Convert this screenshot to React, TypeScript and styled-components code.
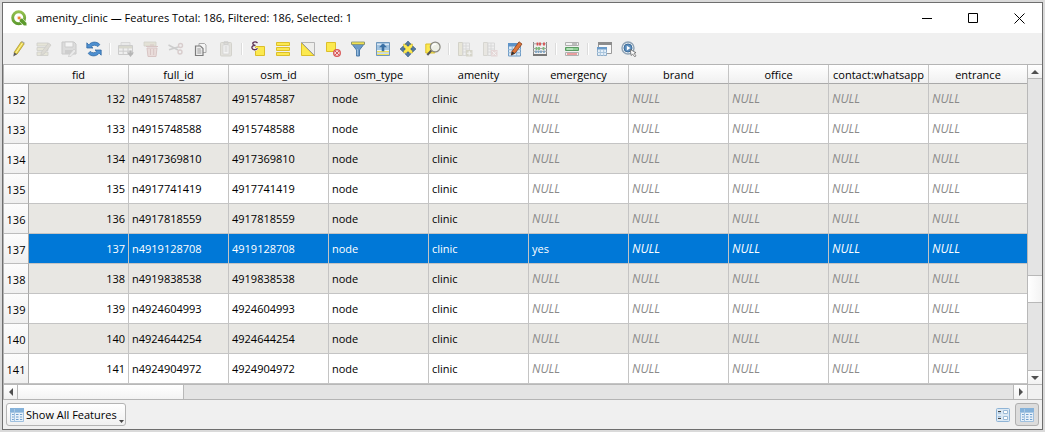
import React from "react";
import styled, { createGlobalStyle, css } from "styled-components";

const GlobalStyle = createGlobalStyle`
  *, *::before, *::after { box-sizing: border-box; }
  body { margin: 0; background: #dadada; }
  button { font: inherit; color: inherit; margin: 0; padding: 0; border: 0; background: none; }
`;

const Desktop = styled.div`
  display: flex;
  height: 100vh;
  padding: 2px;
  font: 11px/16px "Open Sans", "Noto Sans", sans-serif;
  color: #000;
`;

const Window = styled.main`
  display: flex;
  flex: 1;
  flex-direction: column;
  min-width: 0;
  border: 1px solid #6e6e6e;
  background: #f0f0f0;
`;

const TitleBar = styled.header`
  display: flex;
  align-items: center;
  height: 30px;
  padding-left: 8px;
  background: #fff;
`;

const Title = styled.h1`
  flex: 1;
  margin: 0;
  padding-left: 9px;
  font-size: 11px;
  font-weight: 400;
  white-space: nowrap;
`;

const CaptionButton = styled.button`
  display: flex;
  align-items: center;
  justify-content: center;
  width: 46px;
  height: 30px;
`;

const Toolbar = styled.div`
  display: flex;
  align-items: center;
  height: 31px;
  padding-left: 3px;
`;

const ToolButton = styled.button`
  display: flex;
  align-items: center;
  justify-content: center;
  width: 25px;
  height: 25px;
  &:disabled { opacity: 0.33; }
`;

const Separator = styled.span`
  width: 2px;
  height: 12px;
  margin: 0 2px 0 3px;
  border-left: 1px solid #dcdcdc;
  border-right: 1px solid #fff;
`;

const Grid = styled.div`
  display: grid;
  flex: 1;
  grid-template-columns: minmax(0, 1fr) 15px;
  grid-template-rows: minmax(0, 1fr) 15px;
  min-height: 0;
  border: 1px solid #b4b4b4;
  border-right: 0;
`;

const Viewport = styled.div`
  overflow: hidden;
  background: #fff;
`;

const Table = styled.table`
  width: 100%;
  table-layout: fixed;
  border-collapse: separate;
  border-spacing: 0;
`;

const RowHeadCol = styled.col`
  width: 25px;
`;

const FieldCol = styled.col`
  width: 100px;
`;

const headCell = css`
  padding: 0;
  border: 0 solid #b4b4b4;
  font-weight: 400;
`;

const ColumnHead = styled.th<{ $corner?: boolean }>`
  ${headCell}
  height: 19px;
  padding-top: 2px;
  border-right: ${(p) => (p.$corner ? 0 : "1px solid #c4c4c4")};
  border-bottom: 1px solid #a9a9a9;
  background: linear-gradient(#fff, #f0f0f0);
  white-space: nowrap;
  &:last-child { border-right: 0; }
`;

const RowHead = styled.th`
  ${headCell}
  height: 30px;
  padding-top: 2px;
  border-right: 1px solid #a9a9a9;
  border-bottom: 1px solid #bdbdbd;
  background: linear-gradient(#fdfdfd, #efefef);
  color: #000;
  text-align: center;
`;

const Row = styled.tr<{ $selected: boolean }>`
  background: #fff;
  &:nth-child(odd) { background: #e8e7e3; }
  ${(p) =>
    p.$selected &&
    css`
      &&& { background: #0078d7; color: #fff; }
    `}
`;

const Cell = styled.td<{ $right?: boolean }>`
  height: 30px;
  padding: 0 3px;
  border-right: 1px solid #c4c4c4;
  border-bottom: 1px solid #c4c4c4;
  text-align: ${(p) => (p.$right ? "right" : "left")};
  white-space: nowrap;
  &:last-child { border-right: 0; }
`;

const Null = styled.em<{ $selected: boolean }>`
  color: ${(p) => (p.$selected ? "#fff" : "#8a8a8a")};
  font-size: 12px;
`;

const ScrollBar = styled.div<{ $vertical?: boolean }>`
  display: flex;
  flex-direction: ${(p) => (p.$vertical ? "column" : "row")};
  border: 0 solid #b8b8b8;
  ${(p) => (p.$vertical ? "border-left-width: 1px;" : "border-top-width: 1px;")}
  background: #e4e4e4;
`;

const ScrollArrow = styled.button`
  display: flex;
  flex: 0 0 13px;
  align-items: center;
  justify-content: center;
  background: linear-gradient(#fff, #f1f1f1);
`;

const Track = styled.div<{ $vertical?: boolean }>`
  display: grid;
  flex: 1;
  border: 0 solid #b8b8b8;
  ${(p) =>
    p.$vertical
      ? "grid-template-rows: 197fr 28fr 67fr; border-width: 1px 0;"
      : "grid-template-columns: 166fr 829fr; border-width: 0 1px;"}
`;

const Thumb = styled.div<{ $vertical?: boolean }>`
  border: 0 solid #b8b8b8;
  ${(p) =>
    p.$vertical
      ? "grid-row: 2; border-width: 1px 0; background: linear-gradient(90deg, #fff, #f3f3f3);"
      : "border-right-width: 1px; background: linear-gradient(#fff, #f3f3f3);"}
`;

const Corner = styled.div`
  border: 0 solid #b8b8b8;
  border-width: 1px 0 0 1px;
`;

const Footer = styled.footer`
  display: flex;
  align-items: center;
  justify-content: space-between;
  height: 29px;
  padding: 0 3px;
`;

const FilterButton = styled.button`
  display: flex;
  align-items: center;
  gap: 1px;
  height: 23px;
  padding: 0 1px 0 2px;
  border: 1px solid #b4b4b4;
  border-radius: 3px;
  background: linear-gradient(#fff, #f0f0f0);
  white-space: nowrap;
`;

const MenuMark = styled.svg`
  align-self: flex-end;
  margin: 0 0 2px 1px;
`;

const ViewSwitch = styled.div`
  display: flex;
`;

const ViewButton = styled.button<{ $active?: boolean }>`
  display: flex;
  align-items: center;
  justify-content: center;
  width: 24px;
  height: 23px;
  border: 1px solid ${(p) => (p.$active ? "#b0b0b0" : "transparent")};
  border-radius: 3px;
  background: ${(p) => (p.$active ? "#dcdcdc" : "transparent")};
`;

const Icon = ({ children }: { children: React.ReactNode }) => (
  <svg width="16" height="16" viewBox="0 0 16 16" fill="none" aria-hidden="true">
    {children}
  </svg>
);

const Y = "#fce94f";
const YE = "#dcbf2a";

const icons: Record<string, React.ReactNode> = {
  pencil: (
    <>
      <path d="M3 11.5 10.2.8l3 2L6 13.2z" fill="#e8d44d" stroke="#a08b23" strokeWidth=".7" />
      <path d="m4.8 12 7-10.4" stroke="#fff6a0" />
      <path d="m10.2.8 3 2 .6-1.1L11.1 0z" fill="#aaa" />
      <path d="m3 11.5-.7 4L6 13.2z" fill="#5a5a5a" />
    </>
  ),
  multiEdit: (
    <>
      <path d="M1 2h11v3H1zM1 6.5h11v3H1zM1 11h11v3.5H1z" fill="#d3cfaa" stroke="#8b8c7e" strokeWidth=".8" />
      <path d="m5.5 11 7-9 2.5 2-7 9-3.2 1.4z" fill="#b5b09a" stroke="#88867b" strokeWidth=".8" />
    </>
  ),
  save: (
    <>
      <path d="M1 1h12l2 2v10H1z" fill="#b5b5b5" stroke="#7c7c7c" />
      <path d="M4 1h8v5H4z" fill="#fff" stroke="#888" />
      <path d="M4 9h8v4H4z" fill="#888" />
      <path d="m8 14 5-6 2 2-5 5.5-2.5.5z" fill="#ddd" stroke="#777" strokeWidth=".6" />
    </>
  ),
  reload: (
    <>
      <path d="M.8 7V1.8l2 2C5.7.2 11 .3 13.8 3.5L11.9 5.6C9.8 3.7 7 3.8 5.3 5.8L7 7z" fill="#4d8fd0" stroke="#28639f" strokeWidth=".7" />
      <path d="M15.2 9v5.2l-2-2C10.3 15.8 5 15.7 2.2 12.5l1.9-2.1c2.1 1.9 4.9 1.8 6.6-.2L9 9z" fill="#4d8fd0" stroke="#28639f" strokeWidth=".7" />
    </>
  ),
  addFeature: (
    <>
      <path d="M3 1.5h9v3H3z" fill="#ddd" stroke="#999" strokeWidth=".8" />
      <path d="M.5 4.5h14v9H.5z" fill="#eee" stroke="#858585" />
      <path d="M1 5h13v2.5H1z" fill="#aaa88c" />
      <path d="M5.2 7v6M10 7v6M1 10.2h13" stroke="#888" />
      <path d="M13.5 9.5v2H16L12.5 16 9 11.5h2.5v-2z" fill="#444" />
    </>
  ),
  trash: (
    <>
      <path d="M1 1h12v4H1z" fill="#c9c5a4" stroke="#97957e" strokeWidth=".8" />
      <path d="M4 7h10l-1 8.5H5z" fill="#ddb5b0" stroke="#a8706c" />
      <path d="M3 5.5h12M7 4h4M7.5 8v6M10.7 8v6" stroke="#a8706c" />
    </>
  ),
  cut: (
    <>
      <path d="m.5 4 9.5 5M1 8.8l10-3" stroke="#888" strokeWidth="1.5" />
      <circle cx="12.5" cy="4.5" r="2" stroke="#a88" strokeWidth="1.4" />
      <circle cx="12" cy="11" r="2" stroke="#a88" strokeWidth="1.4" />
    </>
  ),
  copy: (
    <>
      <path d="M6 2.5h5.5L13 4v7.5H6z" fill="#f5f5f5" stroke="#aaa" />
      <path d="M2.5 5h5L10 7.5v7H2.5z" fill="#eee" stroke="#7c7c7c" strokeWidth="1.2" />
      <path d="M4.3 8h3.5M4.3 10h4M4.3 12h4" stroke="#999" />
    </>
  ),
  paste: (
    <>
      <rect x="2.5" y="1.5" width="11" height="13.5" rx="1" fill="#c6c3b4" stroke="#999785" />
      <path d="M5 4h6v9H5z" fill="#fff" stroke="#999" strokeWidth=".8" />
      <path d="M6 .8h4v2.4H6zM6.5 6h3M6.5 8h3M6.5 10h3" stroke="#888" />
    </>
  ),
  expression: (
    <>
      <path d="M5.5 5.5h9v9h-9z" fill={Y} stroke={YE} />
      <path d="M7.5 2C5.5-.1 1.6 1 3.2 3.4 3.7 4 4.600 4.300 5.500 4.300 3.500 4.200 1.500 5 2 7.100c.5 2.200 4 2.100 5.500.2" stroke="#f6f2f5" strokeWidth="2.4" />
      <path d="M7.5 2C5.5-.1 1.6 1 3.2 3.4 3.7 4 4.600 4.300 5.500 4.300 3.500 4.200 1.500 5 2 7.100c.5 2.200 4 2.100 5.500.2" stroke="#5b3152" strokeWidth="1.3" />
    </>
  ),
  selectAll: <path d="M1.5 1.5h13v3h-13zM1.5 6.5h13v3h-13zM1.5 11.5h13v3h-13z" fill={Y} stroke={YE} />,
  invert: (
    <>
      <path d="M1.5 1.5h13v13z" fill="#eeeeec" stroke="#b5b5b5" />
      <path d="M1.5 2v12.5H14z" fill={Y} stroke={YE} />
      <path d="m1.5 1.5 13 13" stroke="#999" />
    </>
  ),
  deselect: (
    <>
      <path d="M1.5 1.5h9v9h-9z" fill={Y} stroke={YE} />
      <circle cx="12" cy="12" r="3.3" fill="#f7dada" stroke="#d85555" strokeWidth="1.3" />
      <path d="m9.8 9.8 4.4 4.4M14.1 10l-4.200 4.100" stroke="#d85555" />
    </>
  ),
  filter: (
    <>
      <path d="M1.5 2.5 6.5 9v6h3V9l5-6.5z" fill="#6c9ac8" stroke="#4c7aa8" />
      <path d="M1.500 1h13v2.400h-13z" fill={Y} stroke="#7d8a6a" strokeWidth=".8" />
      <path d="M7.4 8v6.2" stroke="#9dc0e0" />
    </>
  ),
  moveTop: (
    <>
      <path d="M1.5 1.5h13v13h-13z" fill="#a3c4e0" stroke="#6f97bb" />
      <path d="M2 12h12M2 9.5h12" stroke="#e9f1f8" />
      <path d="M2 10.7h12M2 13.5h12" stroke="#f2df51" strokeWidth="1.2" />
      <path d="M8 2.5 4 6.300h2.700v4h2.600v-4H12z" fill="#3a6fa3" />
      <path d="M2 3.300h4M10 3.300h4" stroke="#e9f1f8" />
    </>
  ),
  pan: (
    <>
      <path d="M3.5 3h9v9h-9z" fill={Y} stroke={YE} strokeWidth=".6" />
      <path d="m8 0 3 3.300H9V5H7V3.300H5zM8 16l3-3.300H9V11H7v1.700H5zM0 8l3.300-3v2H5v2H3.300v2zM16 8l-3.300-3v2H11v2h1.700v2z" fill="#55799f" stroke="#355c86" strokeWidth=".6" />
    </>
  ),
  zoomTo: (
    <>
      <path d="M.8 3h9v9h-9z" fill={Y} stroke={YE} />
      <path d="m2.300 14 4-4.500" stroke="#555" strokeWidth="2" />
      <circle cx="10.200" cy="6" r="4.900" fill="#eef0e6" stroke="#8a8a82" strokeWidth="1.200" />
      <path d="M7.300 5.300c.4-1.600 2-2.400 3.800-2" stroke="#fff" strokeWidth="1.300" />
    </>
  ),
  newField: (
    <>
      <path d="M1.5 1.5h4v13h-4z" fill="#d8d4aa" stroke="#99967d" />
      <path d="M6 2h6.5v12.5H6zM6 5h6.5M6 8h6.5M6 11h6.5M9 2v12" fill="#eee" stroke="#aaa" />
      <path d="M9 9h6.5v6.5H9z" fill="#a3a17e" />
      <path d="M12.2 10v4.5M10 12.2h4.5" stroke="#fff" />
    </>
  ),
  deleteField: (
    <>
      <path d="M1.5 1.5h4v13h-4z" fill="#d8d4c4" stroke="#a5a294" />
      <path d="M6 2h6.5v12.5H6zM6 5h6.5M6 8h6.5M6 11h6.5M9 2v12" fill="#eee" stroke="#aaa" />
      <path d="M9 9h6.5v6.5H9z" fill="#cfa5a5" />
      <path d="m10.3 10.3 4 4m0-4-4 4" stroke="#fff" />
    </>
  ),
  organize: (
    <>
      <path d="M1.5 2.5h12V15h-12z" fill="#dceaf6" stroke="#6f9cc6" />
      <path d="M1 2h13v3.5H1z" fill="#5e93c8" />
      <path d="M5.2 5v10M9.7 5v10M1 8.7h13M1 11.8h13" stroke="#8fb4d6" />
      <path d="m5 10.5 7-9.7L15 3l-7 9.3-3.6 1.8z" fill="#de7539" stroke="#86401c" strokeWidth=".8" />
      <path d="m5 10.5-.8 3.7L8 12.3z" fill="#333" />
    </>
  ),
  calculator: (
    <>
      <path d="M1.5 1v14M14.5 1v14" stroke="#888" />
      <path d="M1 2.8h14M1 7.5h14M1 10.4h14" stroke="#a5a5a5" />
      <path d="M5.5 1.5v3M8 1.5v3M12 1.5v3" stroke="#d85050" strokeWidth="1.8" />
      <path d="M4.5 6v3M7 6v3M11.5 6v3" stroke="#7cba7b" strokeWidth="1.8" />
      <path d="M4 9.5v2.5M6.5 9.5v2.5M9 9.5v2.5M12 9.5v2.5" stroke="#7ba4c6" strokeWidth="1.6" />
      <path d="M1 14h14" stroke="#777" strokeWidth="2" />
    </>
  ),
  conditional: (
    <>
      <path d="M1.5 1.5h13v3h-13zM1.5 11.5h13v3h-13z" fill="#f2f2f2" stroke="#b0b0b0" />
      <path d="M1.5 6.5h13v3h-13z" fill="#8fd096" stroke="#5a9a62" />
      <path d="M3 8h6" stroke="#d5f2d7" />
      <path d="M3 13h10" stroke="#e04a4a" />
      <path d="M8 3h5" stroke="#888" />
    </>
  ),
  dock: (
    <>
      <path d="M2.5 1.5h13v11h-13z" fill="#fafafa" stroke="#9a9a9a" />
      <path d="M2 1h14v3H2z" fill="#8d8d8d" />
      <path d="M1.5 6.5h9v8h-9z" fill="#e5eff8" stroke="#8fadc8" />
      <path d="M1 6h10v2.5H1z" fill="#6a9bca" />
      <path d="M4.3 8v7M7.7 8v7M1 11.5h10" stroke="#a9c5dd" />
    </>
  ),
  actions: (
    <>
      <circle cx="7" cy="7" r="6" fill="#e8edf1" stroke="#8fa3b5" strokeWidth="1.4" />
      <circle cx="7" cy="7" r="4" fill="#5b8dbd" stroke="#3d6d9c" />
      <path d="m5.8 4.7 3.6 2.4-3.6 2.3z" fill="#fff" />
      <path d="m9.3 8.5.8 6 1.6-1.4 2 2.7 1.3-1-2-2.500 2-.6z" fill="#fff" stroke="#666" strokeWidth=".8" />
    </>
  ),
  table: (
    <>
      <path d="M1.5 1.5h13v13h-13z" fill="#e8f1f9" stroke="#9fc0de" />
      <path d="M1 1h14v4H1z" fill="#85b2da" />
      <path d="M5.5 2v12M1.5 5.5h13" stroke="#a9c8e3" />
      <path d="M3 7.5h1.8M7 7.5h2.5M11 7.5h2.2M3 10h1.8M7 10h2.5M11 10h2.2M3 12.5h1.8M7 12.5h2.5M11 12.5h2.2" stroke="#6e9fce" />
    </>
  ),
  form: (
    <>
      <rect x="1.5" y="1.5" width="13" height="13" rx="1" fill="#dce9f4" stroke="#8fb4d6" />
      <path d="M3 4.5h3M3 11.5h3" stroke="#444" strokeWidth="1.2" />
      <path d="M3 6h3M3 9.8h3" stroke="#86acd0" />
      <path d="M8.5 3.5h4v3h-4zM8.5 9.5h4v3h-4z" fill="#fff" stroke="#9cbbd6" />
    </>
  ),
};

type Tool = [icon: string, label: string, disabled?: boolean];

const toolGroups: Tool[][] = [
  [
    ["pencil", "Toggle editing mode"],
    ["multiEdit", "Toggle multi edit mode", true],
    ["save", "Save edits", true],
    ["reload", "Reload the table"],
  ],
  [
    ["addFeature", "Add feature", true],
    ["trash", "Delete selected features", true],
    ["cut", "Cut selected rows", true],
    ["copy", "Copy selected rows"],
    ["paste", "Paste features", true],
  ],
  [
    ["expression", "Select features using an expression"],
    ["selectAll", "Select all"],
    ["invert", "Invert selection"],
    ["deselect", "Deselect all"],
    ["filter", "Filter features using form"],
    ["moveTop", "Move selection to top"],
    ["pan", "Pan map to the selected rows"],
    ["zoomTo", "Zoom map to the selected rows"],
  ],
  [
    ["newField", "New field", true],
    ["deleteField", "Delete field", true],
    ["organize", "Organize columns"],
    ["calculator", "Open field calculator"],
  ],
  [["conditional", "Conditional formatting"]],
  [
    ["dock", "Dock attribute table"],
    ["actions", "Actions"],
  ],
];

const columns = [
  "fid", "full_id", "osm_id", "osm_type", "amenity",
  "emergency", "brand", "office", "contact:whatsapp", "entrance",
];

const nullableFields = ["emergency", "brand", "office", "contact:whatsapp", "entrance"];

const osmIds = [
  "4915748587", "4915748588", "4917369810", "4917741419", "4917818559",
  "4919128708", "4919838538", "4924604993", "4924644254", "4924904972",
];

const features = osmIds.map((osmId, i) => ({
  fid: 132 + i,
  osmId,
  emergency: osmId === "4919128708" ? "yes" : null,
}));

const selectedFid = 137;

const Arrow = ({ d }: { d: string }) => (
  <svg width="8" height="8" viewBox="0 0 8 8" aria-hidden="true">
    <path d={d} fill="#505050" />
  </svg>
);

const Logo = () => (
  <svg width="16" height="16" viewBox="0 0 16 16" fill="none" aria-hidden="true">
    <defs>
      <linearGradient id="ring" x1="0" y1="0" x2="0" y2="1">
        <stop offset="0" stopColor="#94bf4e" />
        <stop offset="1" stopColor="#5f9c30" />
      </linearGradient>
    </defs>
    <circle cx="7.7" cy="7.7" r="6" stroke="url(#ring)" strokeWidth="2.9" />
    <path d="M8.3 8.3h3l4.500 4.700v2.800h-2.800L8.300 11.300z" fill="#5c9a2c" stroke="#fff" strokeWidth=".6" />
    <circle cx="8" cy="7.800" r="2.100" fill="#fbd9b4" />
    <circle cx="8.200" cy="8" r="1.300" fill="#ee7f2d" />
  </svg>
);

export default function App() {
  return (
    <>
      <GlobalStyle />
      <Desktop>
        <Window>
          <TitleBar>
            <Logo />
            <Title>amenity_clinic — Features Total: 186, Filtered: 186, Selected: 1</Title>
            <CaptionButton aria-label="Minimize">
              <svg width="11" height="11" stroke="#000"><path d="M0 5.5h10" /></svg>
            </CaptionButton>
            <CaptionButton aria-label="Maximize">
              <svg width="11" height="11" stroke="#000" fill="none"><path d="M.5.5h9v9h-9z" /></svg>
            </CaptionButton>
            <CaptionButton aria-label="Close">
              <svg width="11" height="11" stroke="#000"><path d="m.5.5 10 10m0-10-10 10" /></svg>
            </CaptionButton>
          </TitleBar>
          <Toolbar role="toolbar" aria-label="Attribute table">
            {toolGroups.map((group, i) => (
              <React.Fragment key={i}>
                {i > 0 && <Separator />}
                {group.map(([icon, label, disabled]) => (
                  <ToolButton key={icon} aria-label={label} disabled={disabled}>
                    <Icon>{icons[icon]}</Icon>
                  </ToolButton>
                ))}
              </React.Fragment>
            ))}
          </Toolbar>
          <Grid>
            <Viewport>
              <Table>
                <colgroup>
                  <RowHeadCol />
                  {columns.slice(0, -1).map((name) => <FieldCol key={name} />)}
                  <col />
                </colgroup>
                <thead>
                  <tr>
                    <ColumnHead as="td" $corner />
                    {columns.map((name) => <ColumnHead key={name} scope="col">{name}</ColumnHead>)}
                  </tr>
                </thead>
                <tbody>
                  {features.map(({ fid, osmId, emergency }) => {
                    const selected = fid === selectedFid;
                    return (
                      <Row key={fid} $selected={selected} aria-selected={selected}>
                        <RowHead scope="row">{fid}</RowHead>
                        <Cell $right>{fid}</Cell>
                        <Cell>n{osmId}</Cell>
                        <Cell>{osmId}</Cell>
                        <Cell>node</Cell>
                        <Cell>clinic</Cell>
                        {nullableFields.map((field) => (
                          <Cell key={field}>
                            {field === "emergency" && emergency ? emergency : <Null $selected={selected}>NULL</Null>}
                          </Cell>
                        ))}
                      </Row>
                    );
                  })}
                </tbody>
              </Table>
            </Viewport>
            <ScrollBar $vertical>
              <ScrollArrow aria-label="Scroll up"><Arrow d="M0 6 4 2l4 4z" /></ScrollArrow>
              <Track $vertical><Thumb $vertical /></Track>
              <ScrollArrow aria-label="Scroll down"><Arrow d="m0 2 4 4 4-4z" /></ScrollArrow>
            </ScrollBar>
            <ScrollBar>
              <ScrollArrow aria-label="Scroll left"><Arrow d="M6 0 2 4l4 4z" /></ScrollArrow>
              <Track><Thumb /></Track>
              <ScrollArrow aria-label="Scroll right"><Arrow d="m2 0 4 4-4 4z" /></ScrollArrow>
            </ScrollBar>
            <Corner />
          </Grid>
          <Footer>
            <FilterButton aria-haspopup="menu">
              <Icon>{icons.table}</Icon>
              Show All Features
              <MenuMark width="5" height="3" aria-hidden="true"><path d="M0 0h5L2.5 3z" fill="#444" /></MenuMark>
            </FilterButton>
            <ViewSwitch>
              <ViewButton aria-label="Switch to form view"><Icon>{icons.form}</Icon></ViewButton>
              <ViewButton $active aria-label="Switch to table view"><Icon>{icons.table}</Icon></ViewButton>
            </ViewSwitch>
          </Footer>
        </Window>
      </Desktop>
    </>
  );
}
